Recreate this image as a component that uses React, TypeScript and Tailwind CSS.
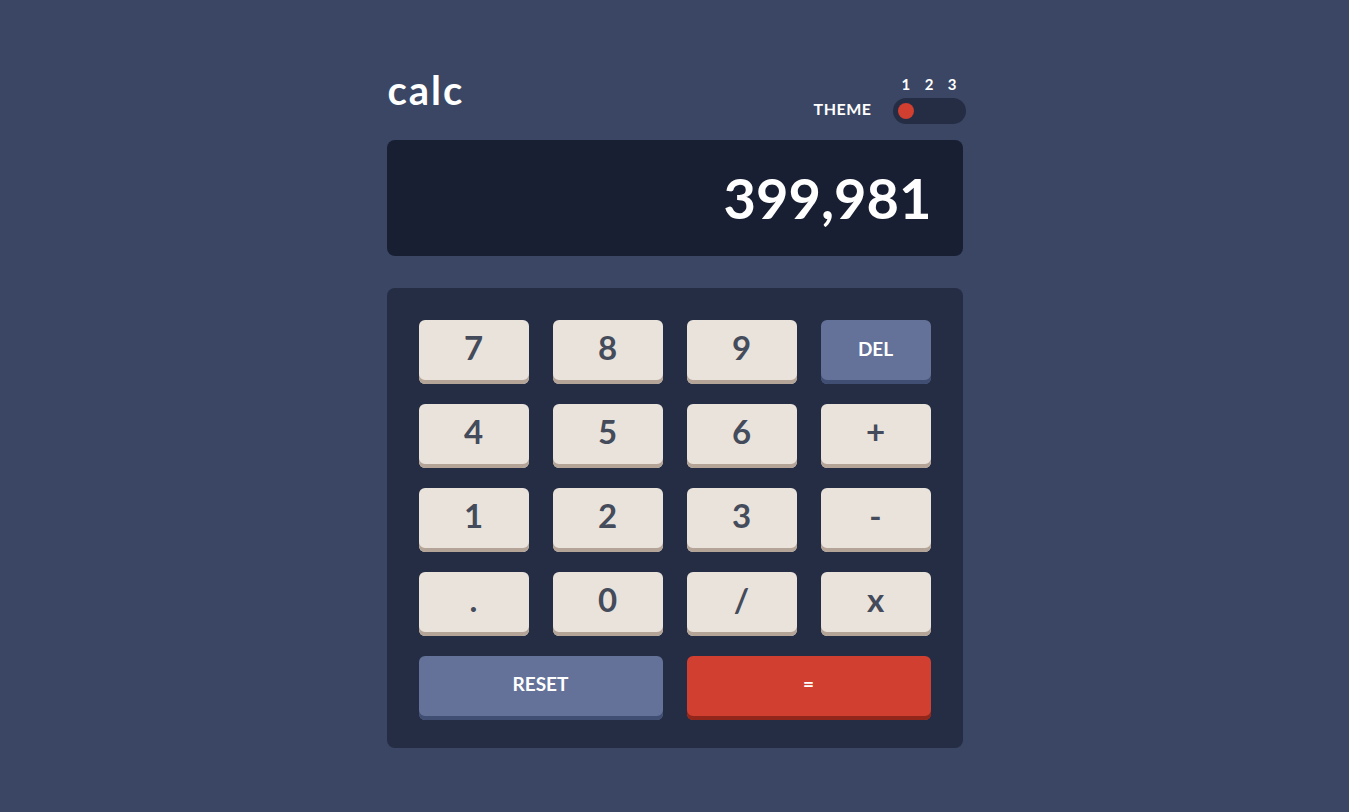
const keys = [
  { label: '7' },
  { label: '8' },
  { label: '9' },
  { label: 'DEL', kind: 'blue' },
  { label: '4' },
  { label: '5' },
  { label: '6' },
  { label: '+' },
  { label: '1' },
  { label: '2' },
  { label: '3' },
  { label: '-' },
  { label: '.' },
  { label: '0' },
  { label: '/' },
  { label: 'x' }
]

function Key({ label, kind }: { label: string; kind?: string }) {
  if (kind === 'blue') {
    return (
      <button className="h-16 rounded-md bg-[#647198] pb-[6px] text-[19px] font-bold text-white shadow-[inset_0_-4px_0_#414e73]">
        {label}
      </button>
    )
  }
  return (
    <button className="h-16 rounded-md bg-[#eae3dc] pb-[10px] text-[33px] leading-none font-bold text-[#444b5a] shadow-[inset_0_-4px_0_#b3a497]">
      {label}
    </button>
  )
}

export default function App() {
  return (
    <div
      className="min-h-[812px] bg-[#3a4663] pt-[70px] text-white"
      style={{ fontFamily: 'Lato, "Noto Sans", sans-serif' }}
    >
      <div className="mx-auto w-[576px]">
        <header className="flex items-end justify-between">
          <h1 className="mb-[14px] pl-[1px] text-[40px] leading-none font-bold tracking-[2px]">calc</h1>

          <div className="mr-[-3px] flex items-end gap-[21px]">
            <span className="mb-[3px] text-[16px] font-bold tracking-[0.5px]">THEME</span>
            <div className="flex flex-col">
              <div className="flex justify-between px-[9px] text-[15px] leading-none font-bold">
                <span>1</span>
                <span>2</span>
                <span>3</span>
              </div>
              <div className="mt-[6px] flex h-[26px] w-[73px] items-center rounded-full bg-[#242d44] px-[5px]">
                <div className="h-4 w-4 rounded-full bg-[#d03f2f]" />
              </div>
            </div>
          </div>
        </header>

        <div className="mt-[16px] flex h-[116px] items-center justify-end rounded-lg bg-[#181f33] px-[31px]">
          <span className="text-[56px] leading-none font-bold">399,981</span>
        </div>

        <div className="mt-8 rounded-lg bg-[#242d44] px-8 pt-8 pb-7">
          <div className="grid grid-cols-4 gap-x-6 gap-y-5">
            {keys.map((k) => (
              <Key key={k.label} label={k.label} kind={k.kind} />
            ))}
            <button className="col-span-2 h-16 rounded-md bg-[#647198] pb-[8px] text-[19px] font-bold text-white shadow-[inset_0_-4px_0_#414e73]">
              RESET
            </button>
            <button className="col-span-2 h-16 rounded-md bg-[#d03f2f] pb-[8px] text-[19px] font-bold text-white shadow-[inset_0_-4px_0_#93261a]">
              =
            </button>
          </div>
        </div>
      </div>
    </div>
  )
}
